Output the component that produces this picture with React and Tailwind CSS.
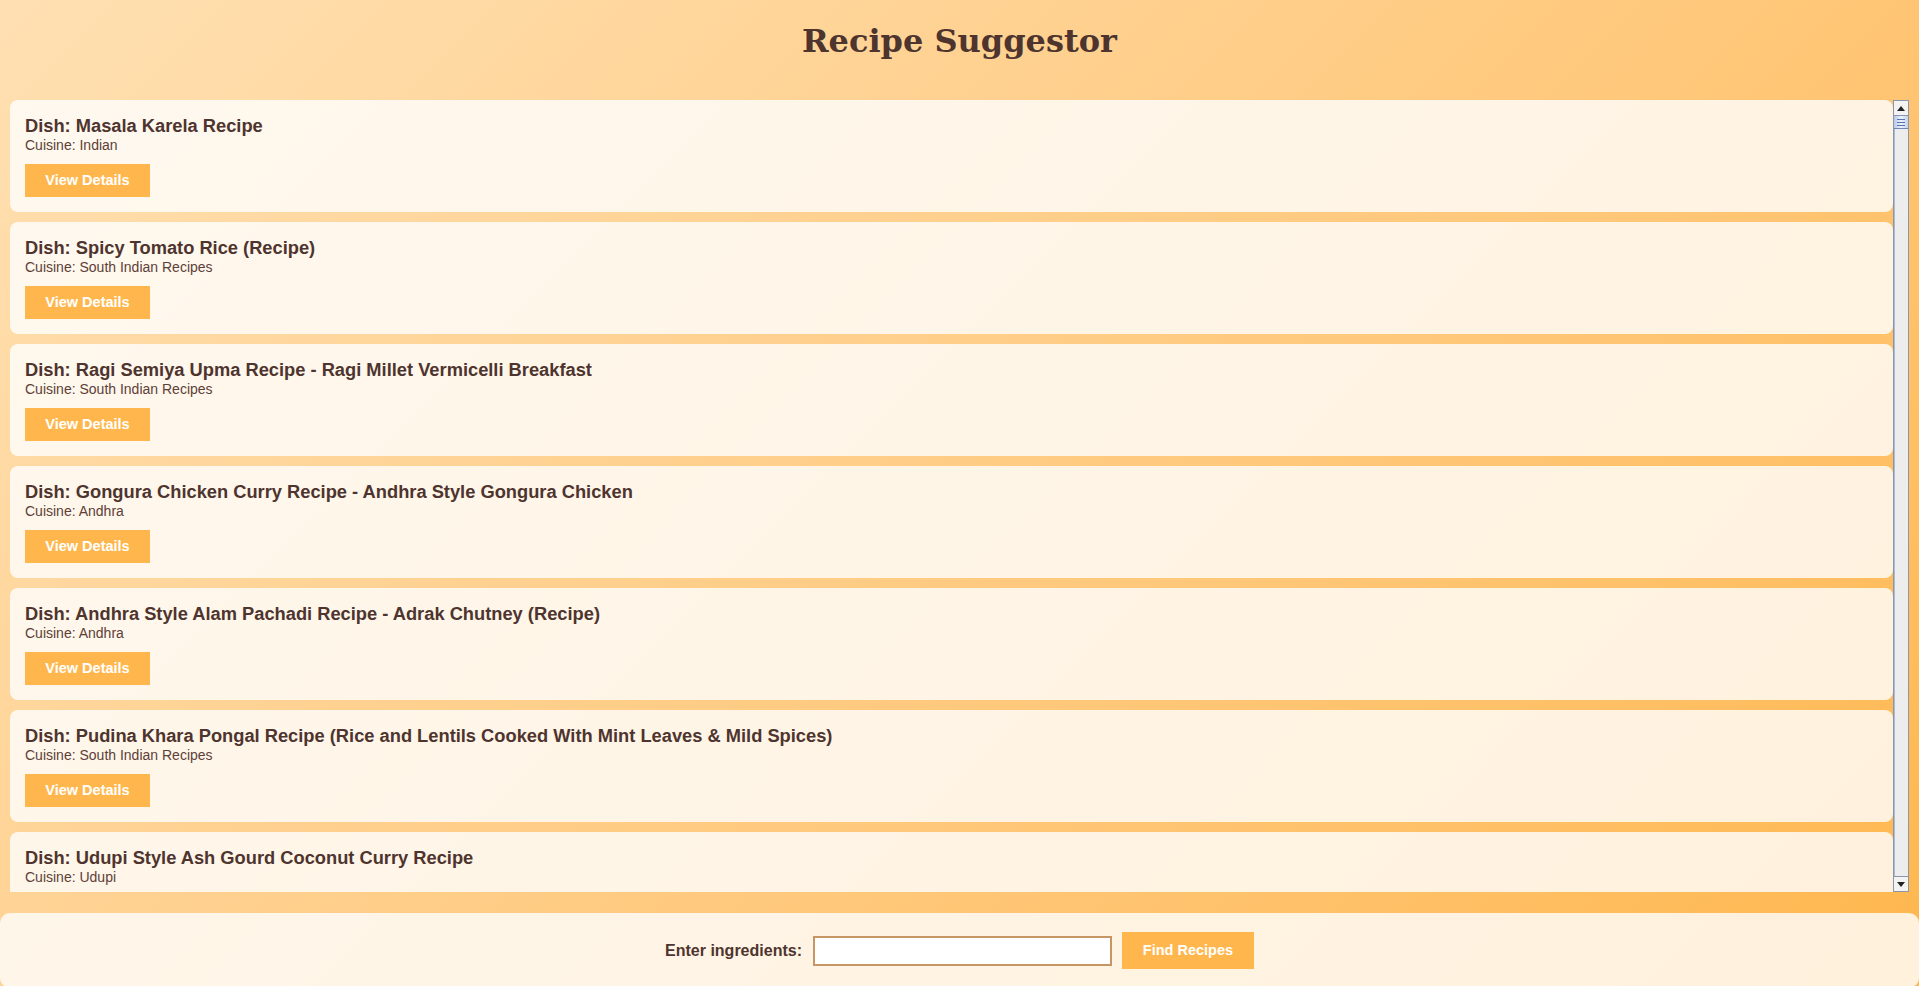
import { useState } from "react";

const recipes = [
  { id: 1, name: "Masala Karela Recipe", cuisine: "Indian" },
  { id: 2, name: "Spicy Tomato Rice (Recipe)", cuisine: "South Indian Recipes" },
  { id: 3, name: "Ragi Semiya Upma Recipe - Ragi Millet Vermicelli Breakfast", cuisine: "South Indian Recipes" },
  { id: 4, name: "Gongura Chicken Curry Recipe - Andhra Style Gongura Chicken", cuisine: "Andhra" },
  { id: 5, name: "Andhra Style Alam Pachadi Recipe - Adrak Chutney (Recipe)", cuisine: "Andhra" },
  { id: 6, name: "Pudina Khara Pongal Recipe (Rice and Lentils Cooked With Mint Leaves & Mild Spices)", cuisine: "South Indian Recipes" },
  { id: 7, name: "Udupi Style Ash Gourd Coconut Curry Recipe", cuisine: "Udupi" },
  { id: 8, name: "Kerala Style Vegetable Stew Recipe", cuisine: "Kerala Recipes" },
  { id: 9, name: "Tamil Nadu Style Kara Kuzhambu Recipe", cuisine: "Tamil Nadu" },
];

// fake classic scrollbar, the real one is hidden
function ScrollBar() {
  return (
    <div className="flex w-[16px] shrink-0 flex-col border border-[#8a97ab] bg-[#ededed]">
      <div className="flex h-[15px] items-center justify-center border-b border-[#8a97ab] bg-[#f3f3f3]">
        <svg width="8" height="5" viewBox="0 0 8 5">
          <polygon points="0,5 8,5 4,0" fill="#222" />
        </svg>
      </div>
      <div className="flex h-[13px] flex-col items-center justify-center gap-[2px] border-b border-[#6f86b8] bg-linear-to-r from-[#b7c8ea] via-[#edf2fc] to-[#c3d1ee]">
        <div className="h-px w-[8px] bg-[#5a74ad]"></div>
        <div className="h-px w-[8px] bg-[#5a74ad]"></div>
        <div className="h-px w-[8px] bg-[#5a74ad]"></div>
      </div>
      <div className="flex-1 border-l border-[#a9bbdd]"></div>
      <div className="flex h-[15px] items-center justify-center border-t border-[#8a97ab] bg-[#f3f3f3]">
        <svg width="8" height="5" viewBox="0 0 8 5">
          <polygon points="0,0 8,0 4,5" fill="#222" />
        </svg>
      </div>
    </div>
  );
}

export default function App() {
  const [ingredients, setIngredients] = useState("");

  return (
    <div className="min-h-screen bg-linear-135 from-[#ffe0b2] to-[#ffb74d] font-['Liberation_Sans',Arial,sans-serif] text-[#4e342e]">

      {/* HEADER */}
      <h1 className="pt-[21px] pb-[39px] text-center font-['DejaVu_Serif',Georgia,serif] text-[32px] font-bold leading-[40px] text-[#4e342e]">
        Recipe Suggestor
      </h1>

      {/* RESULTS */}
      <div className="mx-[10px] flex h-[792px]">
        <div className="flex-1 space-y-[10px] overflow-y-auto [scrollbar-width:none]">
          {recipes.map((r) => (
            <div key={r.id} className="rounded-[8px] bg-white/80 px-[15px] pt-[15px] pb-[15px]">
              <h3 className="text-[18.3px] font-bold leading-[22px]">
                Dish: {r.name}
              </h3>
              <p className="text-[14px] leading-[16px] text-[#5d4037]">
                Cuisine: {r.cuisine}
              </p>
              <button className="mt-[11px] flex h-[33px] w-[125px] items-center justify-center bg-[#ffb74d] text-[14.5px] font-bold text-white">
                View Details
              </button>
            </div>
          ))}
        </div>
        <ScrollBar />
      </div>

      {/* SEARCH */}
      <div className="mt-[21px] flex items-center justify-center rounded-[10px] bg-white/80 py-[19px]">
        <label className="mr-[11px] text-[16px] font-bold">Enter ingredients:</label>
        <input
          value={ingredients}
          onChange={(e) => setIngredients(e.target.value)}
          className="h-[30px] w-[299px] border-2 border-[#c89664] bg-white px-[6px] text-[14px] outline-none"
        />
        <button className="ml-[10px] flex h-[37px] w-[132px] items-center justify-center bg-[#ffb74d] text-[14.5px] font-bold text-white">
          Find Recipes
        </button>
      </div>

    </div>
  );
}
